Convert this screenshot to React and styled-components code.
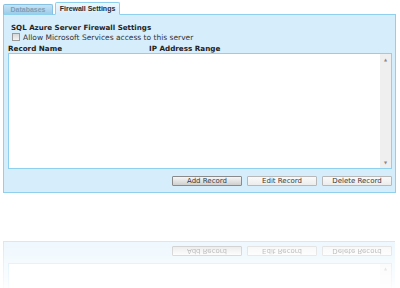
import React from "react";
import styled, { createGlobalStyle } from "styled-components";

const Global = createGlobalStyle`
  html, body { margin: 0; padding: 0; background: #ffffff; }
  body { font-family: "DejaVu Sans", Verdana, sans-serif; }
`;

const Page = styled.div`
  width: 400px;
  height: 288px;
  overflow: hidden;
  padding: 2px 5px 0 3px;
  box-sizing: border-box;
  display: flex;
  flex-direction: column;
`;

const TabBar = styled.div`
  display: flex;
  align-items: flex-end;
  gap: 2px;
  height: 13px;
  margin-bottom: -1px;
  position: relative;
  z-index: 1;
`;

const Tab = styled.div`
  box-sizing: border-box;
  height: ${(p) => (p.$active ? "13px" : "11px")};
  width: ${(p) => p.$w}px;
  display: flex;
  align-items: center;
  justify-content: center;
  font-family: "Liberation Sans", Arial, sans-serif;
  font-weight: bold;
  font-size: 7px;
  border: 1px solid ${(p) => (p.$active ? "#8fd0ef" : "#86c0e2")};
  border-bottom: ${(p) => (p.$active ? "1px solid #d6edfc" : "1px solid #8fd0ef")};
  border-radius: 2px 2px 0 0;
  color: ${(p) => (p.$active ? "#1f2a33" : "#7f9fb6")};
  background: ${(p) =>
    p.$active
      ? "linear-gradient(#eef8fe, #d6edfc)"
      : "linear-gradient(#c4e3f6, #9ccde9)"};
`;

const Panel = styled.div`
  box-sizing: border-box;
  width: 393px;
  height: 179px;
  flex-shrink: 0;
  background: #d6edfc;
  border: 1px solid #8fd0ef;
  padding: 8px 3px 4px 4px;
  display: flex;
  flex-direction: column;
`;

const Title = styled.div`
  font-weight: bold;
  font-size: 7.1px;
  color: #222;
  padding-left: 3px;
  line-height: 9px;
`;

const CheckRow = styled.label`
  display: flex;
  align-items: center;
  gap: 3px;
  padding-left: 4px;
  height: 10px;
  font-size: 7.5px;
  color: #333;
`;

const Box = styled.span`
  width: 6px;
  height: 6px;
  border: 1px solid #9a9a9a;
  background: linear-gradient(#d8d8d8, #f4f4f4);
  display: inline-block;
`;

const Headers = styled.div`
  display: flex;
  margin-top: 3px;
  font-weight: bold;
  font-size: 7.2px;
  color: #222;
  line-height: 8px;
`;

const Col = styled.div`
  width: ${(p) => p.$w}px;
`;

const ListBox = styled.div`
  box-sizing: border-box;
  height: ${(p) => (p.$stub ? "auto" : "116px")};
  flex: ${(p) => (p.$stub ? "1" : "none")};
  background: #fff;
  border: 1px solid #8fd0ef;
  border-top: ${(p) => (p.$stub ? "none" : "1px solid #8fd0ef")};
  display: flex;
  justify-content: flex-end;
`;

const Scroll = styled.div`
  width: 11px;
  background: #efefef;
  display: flex;
  flex-direction: column;
  justify-content: ${(p) => (p.$stub ? "flex-end" : "space-between")};
  align-items: center;
  padding: 3px 0;
  font-size: 4px;
  color: #888;
`;

const ButtonRow = styled.div`
  display: flex;
  justify-content: flex-end;
  gap: 5px;
  margin-top: 7px;
`;

const Button = styled.div`
  box-sizing: border-box;
  width: 70px;
  height: 10px;
  display: flex;
  align-items: center;
  justify-content: center;
  font-size: 7px;
  color: #3a3a3a;
  border: 1px solid ${(p) => (p.$pressed ? "#8a8a8a" : "#b8b8b8")};
  border-radius: 1px;
  background: ${(p) =>
    p.$pressed
      ? "linear-gradient(#f6f6f6, #cfcfcf)"
      : "linear-gradient(#fafafa, #ececec)"};
`;

const Gap = styled.div`
  height: 48px;
  flex-shrink: 0;
`;

const Reflection = styled.div`
  height: 48px;
  overflow: hidden;
  flex-shrink: 0;
  transform: scaleY(-1);
  -webkit-mask-image: linear-gradient(rgba(0,0,0,0.05), rgba(0,0,0,0.42));
  mask-image: linear-gradient(rgba(0,0,0,0.05), rgba(0,0,0,0.42));
`;

const ReflectPanel = styled(Panel)`
  height: 48px;
  border-top: none;
  padding-top: 0;
`;

function Buttons() {
  return (
    <ButtonRow>
      <Button $pressed>Add Record</Button>
      <Button>Edit Record</Button>
      <Button>Delete Record</Button>
    </ButtonRow>
  );
}

export default function App() {
  return (
    <>
      <Global />
      <Page>
        <TabBar>
          <Tab $w={50}>Databases</Tab>
          <Tab $active $w={65}>Firewall Settings</Tab>
        </TabBar>
        <Panel>
          <Title>SQL Azure Server Firewall Settings</Title>
          <CheckRow>
            <Box />
            Allow Microsoft Services access to this server
          </CheckRow>
          <Headers>
            <Col $w={141}>Record Name</Col>
            <Col>IP Address Range</Col>
          </Headers>
          <ListBox>
            <Scroll>
              <span>▲</span>
              <span>▼</span>
            </Scroll>
          </ListBox>
          <Buttons />
        </Panel>
        <Gap />
        <Reflection aria-hidden="true">
          <ReflectPanel>
            <ListBox $stub>
              <Scroll $stub>
                <span>▼</span>
              </Scroll>
            </ListBox>
            <Buttons />
          </ReflectPanel>
        </Reflection>
      </Page>
    </>
  );
}
